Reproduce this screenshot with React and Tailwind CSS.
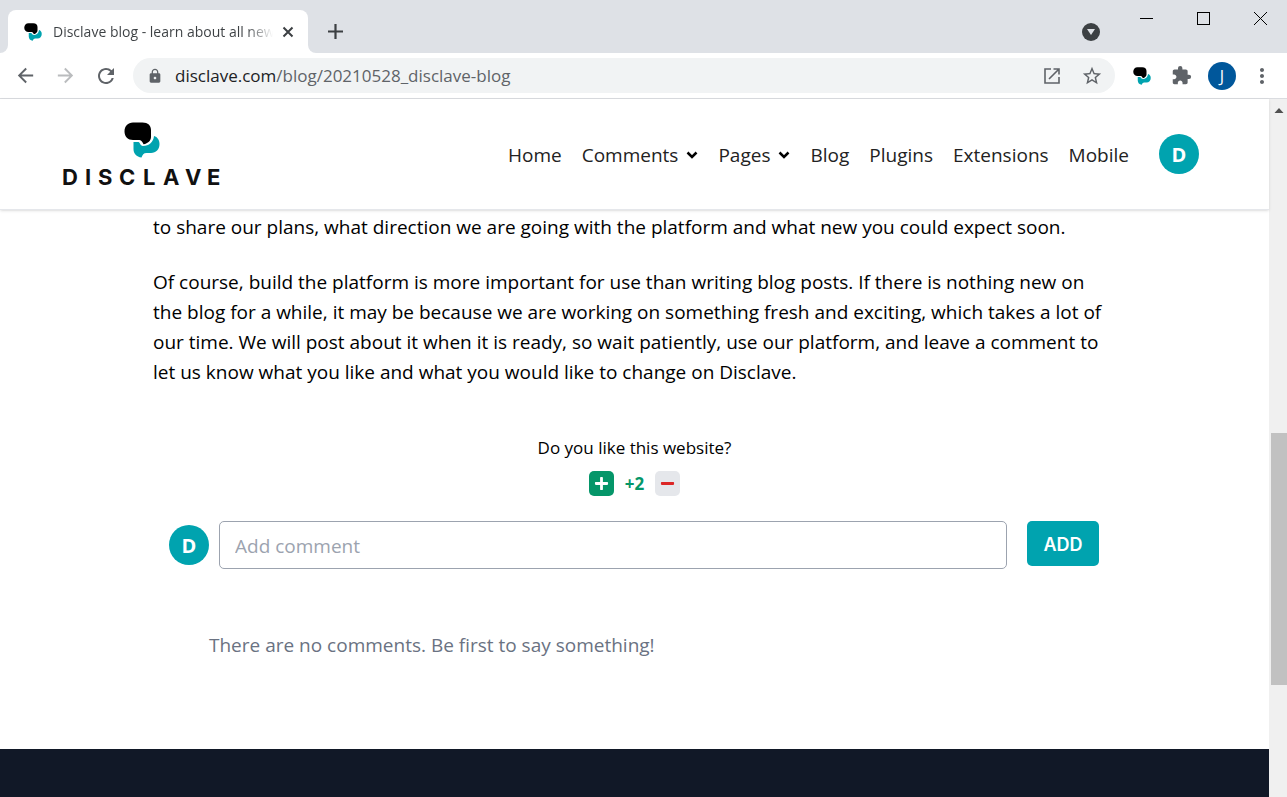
import { FaPlus, FaMinus } from "react-icons/fa";
import {
  MdLock, MdStarBorder, MdExtension, MdMoreVert, MdArrowBack, MdArrowForward,
  MdRefresh,
} from "react-icons/md";

function Mark({ className }) {
  return (
    <svg viewBox="0 0 36 36" className={className} aria-hidden="true">
      <path fill="#000" d="M9 0.500H18.500C24 0.500 27 3.500 27 8V15C27 18.500 24 21.500 19.500 22.300C18.600 20 17.500 18.300 15.500 18H9C4 18 0.500 14.500 0.500 9.500C0.500 4 4 0.500 9 0.500Z" />
      <path fill="#00a3af" d="M30 14C33.500 15 35.500 18 35.500 22C35.500 27.500 32 31 27 31H22.500C19.500 31 18.500 33 17.500 35.500C12.500 35 9.500 31.500 9.500 27V20H14.500C16 20.500 16 23.500 19 24C25 24 29.500 20 30 14Z" />
    </svg>
  );
}

function Chevron() {
  return (
    <svg viewBox="0 0 12 8" className="h-2 w-3" aria-hidden="true">
      <path d="M1.500 1.500L6 6L10.500 1.500" fill="none" stroke="#000" strokeWidth="2.500" />
    </svg>
  );
}

function Avatar() {
  return (
    <span className="flex size-10 shrink-0 items-center justify-center rounded-full bg-[#00a3af] pt-px text-xl font-bold text-white">
      D
    </span>
  );
}

function TabStrip() {
  return (
    <div className="flex h-[53px] bg-[#dee1e6]">
      <div className="flex w-2 items-end bg-white">
        <div className="h-full w-full rounded-br-lg bg-[#dee1e6]" />
      </div>
      <div className="mt-[10px] flex w-[300px] items-center rounded-t-lg bg-white pr-3 pl-4">
        <Mark className="size-[18px]" />
        <div className="ml-[11px] w-[220px] overflow-hidden whitespace-nowrap bg-linear-to-r from-[#3c4043] from-88% to-transparent bg-clip-text text-sm text-transparent">
          Disclave blog - learn about all new
        </div>
        <button aria-label="Close tab" className="ml-[9px]">
          <svg viewBox="0 0 12 12" className="size-3"><path d="M1.500 1.500L10.500 10.500M10.500 1.500L1.500 10.500" stroke="#3c4043" strokeWidth="2" /></svg>
        </button>
      </div>
      <div className="flex w-2 bg-white">
        <div className="h-full w-full rounded-bl-lg bg-[#dee1e6]" />
      </div>
      <button aria-label="New tab" className="mt-[10px] ml-3">
        <svg viewBox="0 0 15 15" className="size-[15px]"><path d="M7.500 0V15M0 7.500H15" stroke="#3c4043" strokeWidth="2.200" /></svg>
      </button>
      <div className="flex-1" />
      <button aria-label="Search tabs" className="mt-[23px] mr-[40px] flex size-[18px] items-center justify-center rounded-full bg-[#3c4043]">
        <svg viewBox="0 0 8 6" className="h-[6px] w-2"><path d="M0 0H8L4 6Z" fill="#dee1e6" /></svg>
      </button>
      <div className="mr-5 flex items-start gap-[44px] pt-3">
        <button aria-label="Minimize"><svg className="block size-[13px]" viewBox="0 0 13 13"><path d="M0 6.500H13" stroke="#000" /></svg></button>
        <button aria-label="Maximize"><svg className="block size-[13px]" viewBox="0 0 13 13"><rect x=".5" y=".5" width="12" height="12" fill="none" stroke="#000" /></svg></button>
        <button aria-label="Close window"><svg className="block size-[13px]" viewBox="0 0 13 13"><path d="M0 0L13 13M13 0L0 13" stroke="#000" /></svg></button>
      </div>
    </div>
  );
}

function Toolbar() {
  return (
    <div className="flex h-[46px] items-center border-b border-[#dadce0] bg-white pr-[13px] pl-[14px] text-[#5f6368]">
      <button aria-label="Back"><MdArrowBack size={23} /></button>
      <button aria-label="Forward" className="ml-[17px] text-[#babcbe]"><MdArrowForward size={23} /></button>
      <button aria-label="Reload" className="ml-[17px]"><MdRefresh size={24} /></button>
      <div className="ml-[15px] flex h-[35px] flex-1 items-center rounded-full bg-[#f1f3f4] pr-3 pl-[14px]">
        <MdLock size={16} />
        <div className="ml-3 flex-1 text-[17px]">
          <span className="text-[#202124]">disclave.com</span>/blog/20210528_disclave-blog
        </div>
        <button aria-label="Open in new window">
          <svg viewBox="0 0 16 16" className="size-4" fill="none" stroke="currentColor" strokeWidth="1.600">
            <path d="M7 1H1V15H15V9M9.500 1H15V6.500M15 1L5 11" />
          </svg>
        </button>
        <button aria-label="Bookmark this page" className="ml-[21px]"><MdStarBorder size={22} /></button>
      </div>
      <button aria-label="Disclave" className="ml-[18px]"><Mark className="size-[18px]" /></button>
      <button aria-label="Extensions" className="ml-5"><MdExtension size={21} /></button>
      <button aria-label="Profile" className="ml-4 flex size-7 items-center justify-center rounded-full bg-[#00579b] text-base text-white">J</button>
      <button aria-label="Menu" className="ml-[14px]"><MdMoreVert size={24} /></button>
    </div>
  );
}

function Header() {
  const link = "flex items-center gap-2 pt-[2px]";
  return (
    <header className="z-10 flex h-[111px] items-center justify-between border-b border-gray-200 bg-white pr-[70px] pl-[62px] shadow-sm">
      <a href="#home" aria-label="Disclave home" className="flex flex-col items-center gap-[7px] pt-px">
        <Mark className="size-9" />
        <svg viewBox="0 0 160 22" className="h-[22px] w-40 overflow-visible">
          <text y="20" x="0 23 36 57 81 101 123 145" fontFamily="Inter, sans-serif" fontWeight="700" fontSize="22" fill="#111">DISCLAVE</text>
        </svg>
      </a>
      <nav className="flex items-center gap-5 text-[19px] text-[#222]">
        <a href="#home" className={link}>Home</a>
        <a href="#comments" className={link}>Comments <Chevron /></a>
        <a href="#pages" className={link}>Pages <Chevron /></a>
        <a href="#blog" className={link}>Blog</a>
        <a href="#plugins" className={link}>Plugins</a>
        <a href="#extensions" className={link}>Extensions</a>
        <a href="#mobile" className={link}>Mobile</a>
        <button aria-label="Account" className="ml-[10px]"><Avatar /></button>
      </nav>
    </header>
  );
}

function Scrollbar() {
  return (
    <div className="flex w-[18px] shrink-0 flex-col bg-[#f0f0f0] pl-[2px]" aria-hidden="true">
      <svg viewBox="0 0 16 20" className="h-5 w-4"><path d="M3.500 14L8 9L12.500 14Z" fill="#505050" /></svg>
      <div className="flex-[314]" />
      <div className="flex-[252] bg-[#c1c1c1]" />
      <div className="flex-[112]" />
    </div>
  );
}

export default function App() {
  return (
    <div className="flex min-h-screen flex-col bg-white font-['Open_Sans',sans-serif] text-black">
      <TabStrip />
      <Toolbar />
      <div className="flex flex-1">
        <div className="flex min-w-0 flex-1 flex-col">
          <Header />
          <main className="mx-auto w-full max-w-[963px] text-[19px] leading-[30px]">
            <p className="mt-[2px]">
              to share our plans, what direction we are going with the platform and what new you could expect soon.
            </p>
            <p className="mt-[25px]">
              Of course, build the platform is more important for use than writing blog posts. If there is nothing new on the blog for a while, it may be because we are working on something fresh and exciting, which takes a lot of our time. We will post about it when it is ready, so wait patiently, use our platform, and leave a comment to let us know what you like and what you would like to change on Disclave.
            </p>
            <section className="mt-[46px] flex flex-col items-center">
              <h2 className="text-[17px]">Do you like this website?</h2>
              <div className="mt-2 flex items-center gap-[11px]">
                <button aria-label="Like" className="flex size-[25px] items-center justify-center rounded-[5px] bg-[#059669] text-white"><FaPlus size={15} /></button>
                <span className="pt-px text-[17px] leading-6 font-bold text-[#059669]">+2</span>
                <button aria-label="Dislike" className="flex size-[25px] items-center justify-center rounded-[5px] bg-gray-200 text-[#dc2626]"><FaMinus size={15} /></button>
              </div>
            </section>
            <form className="mt-[25px] flex items-start pr-[17px] pl-4">
              <div className="mt-1"><Avatar /></div>
              <input aria-label="Add comment" placeholder="Add comment" className="ml-[10px] h-12 min-w-0 flex-1 rounded-[5px] border border-[#9ca3af] px-[15px] pt-[2px] placeholder:text-[#9ca3af]" />
              <button type="button" className="ml-5 h-[45px] w-[72px] rounded-[5px] bg-[#00a3af] pt-[2px] font-['Inter',sans-serif] text-[18px] font-semibold text-white">ADD</button>
            </form>
            <p className="mt-[61px] ml-14 text-gray-500">There are no comments. Be first to say something!</p>
          </main>
          <footer className="mt-[89px] min-h-12 flex-1 bg-[#111827]" />
        </div>
        <Scrollbar />
      </div>
    </div>
  );
}
